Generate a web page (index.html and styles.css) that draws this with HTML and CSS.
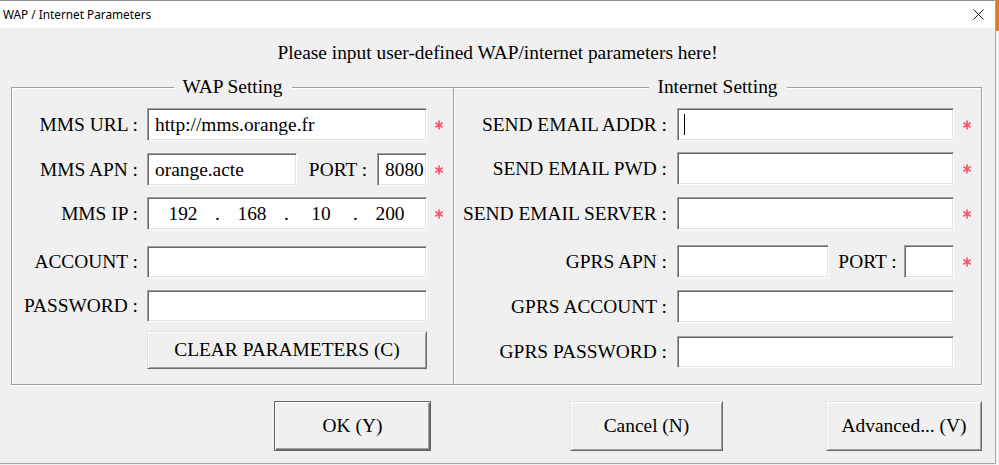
FILE: index.html
```html
<!DOCTYPE html>
<html>
<head>
<meta charset="utf-8">
<title>WAP / Internet Parameters</title>
<link rel="stylesheet" href="styles.css">
</head>
<body>
<div class="screen">
  <div class="window">
    <div class="titlebar">
      <span class="title">WAP / Internet Parameters</span>
      <svg class="close" width="11" height="11" viewBox="0 0 11 11"><path d="M0.5 0.5L10.5 10.5M10.5 0.5L0.5 10.5" stroke="#1b1b1b" stroke-width="1" fill="none"/></svg>
    </div>
    <div class="header">Please input user-defined WAP/internet parameters here!</div>
    <div class="groups">
      <div class="group wap">
        <span class="legend">WAP Setting</span>
        <div class="row r1">
          <span class="lbl">MMS URL :</span>
          <div class="edit">http://mms.orange.fr</div>
          <svg class="req" width="8" height="10" viewBox="0 0 8 10"><path d="M4 0.5V9.5M0.3 2.8L7.7 7.2M0.3 7.2L7.7 2.8" stroke="#ff5266" stroke-width="1.7" fill="none"/></svg>
        </div>
        <div class="row r2">
          <span class="lbl">MMS APN :</span>
          <div class="split">
            <div class="edit apn">orange.acte</div>
            <span class="port-lbl">PORT :</span>
            <div class="edit port">8080</div>
          </div>
          <svg class="req" width="8" height="10" viewBox="0 0 8 10"><path d="M4 0.5V9.5M0.3 2.8L7.7 7.2M0.3 7.2L7.7 2.8" stroke="#ff5266" stroke-width="1.7" fill="none"/></svg>
        </div>
        <div class="row r3">
          <span class="lbl">MMS IP :</span>
          <div class="edit ip">
            <span class="seg">192</span><span class="dot">.</span><span class="seg">168</span><span class="dot">.</span><span class="seg">10</span><span class="dot">.</span><span class="seg">200</span>
          </div>
          <svg class="req" width="8" height="10" viewBox="0 0 8 10"><path d="M4 0.5V9.5M0.3 2.8L7.7 7.2M0.3 7.2L7.7 2.8" stroke="#ff5266" stroke-width="1.7" fill="none"/></svg>
        </div>
        <div class="row r4">
          <span class="lbl">ACCOUNT :</span>
          <div class="edit"></div>
        </div>
        <div class="row r5">
          <span class="lbl">PASSWORD :</span>
          <div class="edit"></div>
        </div>
        <div class="row r6">
          <span class="lbl"></span>
          <div class="btn clear">CLEAR PARAMETERS (C)</div>
        </div>
      </div>
      <div class="group inet">
        <span class="legend">Internet Setting</span>
        <div class="row r1">
          <span class="lbl">SEND EMAIL ADDR :</span>
          <div class="edit"><span class="caret"></span></div>
          <svg class="req" width="8" height="10" viewBox="0 0 8 10"><path d="M4 0.5V9.5M0.3 2.8L7.7 7.2M0.3 7.2L7.7 2.8" stroke="#ff5266" stroke-width="1.7" fill="none"/></svg>
        </div>
        <div class="row r2">
          <span class="lbl">SEND EMAIL PWD :</span>
          <div class="edit"></div>
          <svg class="req" width="8" height="10" viewBox="0 0 8 10"><path d="M4 0.5V9.5M0.3 2.8L7.7 7.2M0.3 7.2L7.7 2.8" stroke="#ff5266" stroke-width="1.7" fill="none"/></svg>
        </div>
        <div class="row r3">
          <span class="lbl">SEND EMAIL SERVER :</span>
          <div class="edit"></div>
          <svg class="req" width="8" height="10" viewBox="0 0 8 10"><path d="M4 0.5V9.5M0.3 2.8L7.7 7.2M0.3 7.2L7.7 2.8" stroke="#ff5266" stroke-width="1.7" fill="none"/></svg>
        </div>
        <div class="row r4">
          <span class="lbl">GPRS APN :</span>
          <div class="split">
            <div class="edit gapn"></div>
            <span class="port-lbl">PORT :</span>
            <div class="edit port"></div>
          </div>
          <svg class="req" width="8" height="10" viewBox="0 0 8 10"><path d="M4 0.5V9.5M0.3 2.8L7.7 7.2M0.3 7.2L7.7 2.8" stroke="#ff5266" stroke-width="1.7" fill="none"/></svg>
        </div>
        <div class="row r5">
          <span class="lbl">GPRS ACCOUNT :</span>
          <div class="edit"></div>
        </div>
        <div class="row r6">
          <span class="lbl">GPRS PASSWORD :</span>
          <div class="edit"></div>
        </div>
      </div>
    </div>
    <div class="actions">
      <div class="btn default ok">OK (Y)</div>
      <div class="btn cancel">Cancel (N)</div>
      <div class="btn adv">Advanced... (V)</div>
    </div>
  </div>
  <div class="edge"><div class="edge-top"></div></div>
</div>
</body>
</html>
```

FILE: styles.css
```css
* { box-sizing: border-box; }
html, body { margin: 0; padding: 0; }
body {
  width: 999px;
  height: 465px;
  overflow: hidden;
  background: #f0f0f0;
  font-family: "Liberation Serif", "Times New Roman", serif;
  font-size: 19.4px;
  color: #000;
}
.screen { display: flex; height: 465px; }
.window {
  width: 996px;
  height: 464px;
  flex: none;
  display: flex;
  flex-direction: column;
  background: #f0f0f0;
  border-right: 1px solid #a8a8a8;
  border-bottom: 1px solid #a8a8a8;
}
.edge { flex: 1; display: flex; flex-direction: column; background: #f4f4f4; }
.edge-top { height: 31px; background: #df7a22; }

.titlebar {
  height: 28px;
  flex: none;
  background: #fff;
  border-top: 1px solid #8e8e8e;
  display: flex;
  align-items: center;
  padding: 0 11px 1px 3px;
  font-family: "Noto Sans", "Open Sans", sans-serif;
  font-size: 11.8px;
  color: #000;
}
.close { margin-left: auto; }

.header {
  margin-top: 14px;
  height: 22px;
  line-height: 22px;
  text-align: center;
  white-space: nowrap;
}

.groups {
  margin-top: 23px;
  padding-left: 11px;
  display: flex;
}
.group {
  position: relative;
  height: 298px;
  border: 1px solid #a0a0a0;
  box-shadow: inset 1px 1px 0 #fff, 1px 1px 0 #fff;
  padding-top: 20px;
  display: flex;
  flex-direction: column;
}
.wap { width: 443px; }
.inet { width: 529px; margin-left: -1px; }
.legend {
  position: absolute;
  top: -12px;
  left: 50%;
  transform: translateX(-50%);
  line-height: 22px;
  padding: 0 9px;
  background: #f0f0f0;
  white-space: nowrap;
}

.row {
  display: grid;
  align-items: center;
  height: 33px;
  flex: none;
}
.wap .row { grid-template-columns: 127px 280px 8px; column-gap: 8px; }
.inet .row { grid-template-columns: 214px 277px 8px; column-gap: 9px; }

.wap .r2 { margin-top: 12px; }
.wap .r3 { margin-top: 11px; }
.wap .r4 { margin-top: 16px; height: 32px; }
.wap .r5 { margin-top: 12px; height: 32px; }
.wap .r6 { margin-top: 9px; height: 38px; }

.inet .r2 { margin-top: 11px; }
.inet .r3 { margin-top: 12px; }
.inet .r4 { margin-top: 15px; }
.inet .r5 { margin-top: 12px; }
.inet .r6 { margin-top: 13px; height: 32px; }

.lbl {
  text-align: right;
  padding-right: 1px;
  white-space: nowrap;
  line-height: 22px;
}

.edit {
  height: 100%;
  background: #fff;
  border: 1px solid;
  border-color: #a0a0a0 #fff #fff #a0a0a0;
  box-shadow: inset 1px 1px 0 #696969, inset -1px -1px 0 #e3e3e3;
  padding-left: 7px;
  display: flex;
  align-items: center;
  line-height: 22px;
  white-space: nowrap;
  overflow: hidden;
}
.split {
  height: 100%;
  display: flex;
  align-items: center;
}
.apn { width: 150px; flex: none; }
.gapn { width: 152px; flex: none; }
.port { width: 50px; flex: none; }
.port-lbl { flex: 1; text-align: center; padding-left: 2px; line-height: 22px; white-space: nowrap; }

.ip { padding-left: 10px; }
.seg { width: 50px; text-align: center; flex: none; }
.dot { width: 19px; text-align: center; flex: none; }

.caret {
  display: block;
  width: 1px;
  height: 21px;
  background: #000;
  margin-left: -1px;
}

.req { display: block; }

.btn {
  display: flex;
  align-items: center;
  justify-content: center;
  background: #f0f0f0;
  border: 1px solid;
  border-color: #e3e3e3 #696969 #696969 #e3e3e3;
  box-shadow: inset 1px 1px 0 #fff, inset -1px -1px 0 #a0a0a0;
  line-height: 22px;
  white-space: nowrap;
}
.clear { height: 38px; grid-column: 2; }
.default {
  border-color: #646464;
  box-shadow: inset 1px 1px 0 #fff, inset -1px -1px 0 #696969, inset -2px -2px 0 #a0a0a0;
}

.actions {
  margin-top: 16px;
  height: 50px;
  display: flex;
  padding-left: 274px;
  flex: none;
}
.ok { width: 157px; }
.cancel { width: 153px; margin-left: 139px; }
.adv { width: 156px; margin-left: 103px; }
```
